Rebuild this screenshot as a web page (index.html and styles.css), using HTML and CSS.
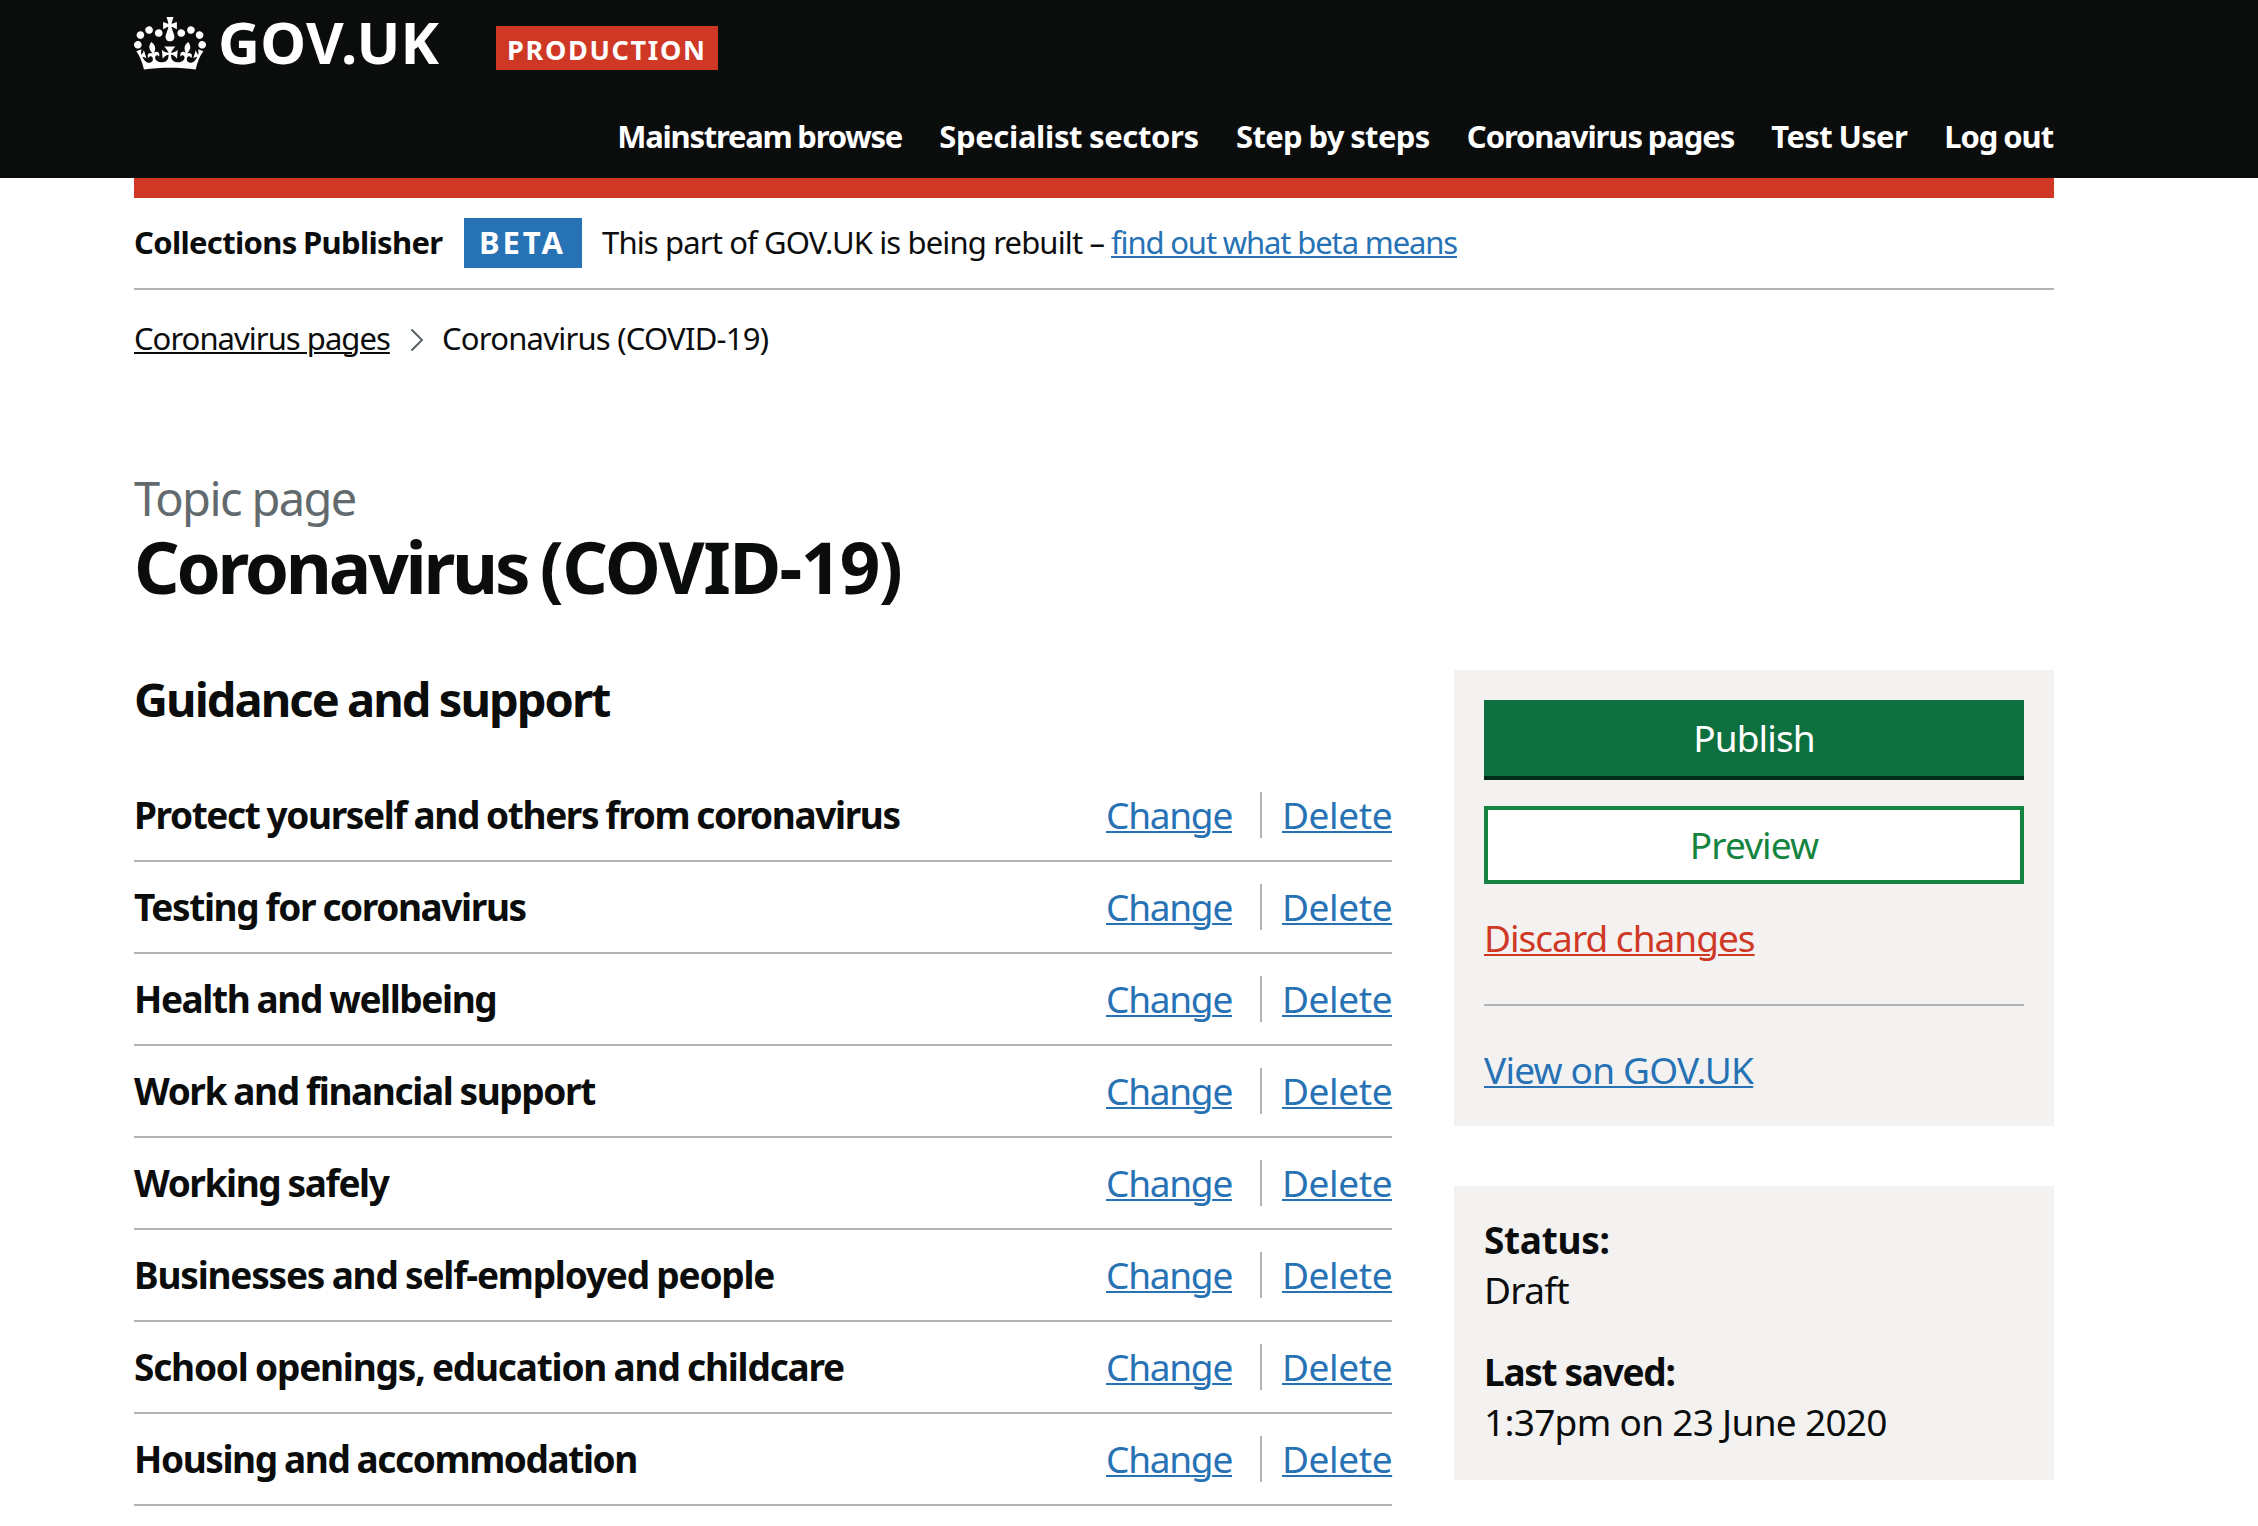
FILE: index.html
```html
<!DOCTYPE html>
<html lang="en">
<head>
<meta charset="utf-8">
<title>Coronavirus (COVID-19) - Collections Publisher</title>
<link rel="stylesheet" href="styles.css">
</head>
<body>
<header class="header">
  <div class="container">
    <div class="brand">
      <svg class="crown" viewBox="0 0 132 97" aria-hidden="true"><path fill="currentColor" fill-rule="evenodd" d="M25 30.2c3.5 1.5 7.7-.2 9.1-3.7 1.5-3.6-.2-7.8-3.9-9.2-3.6-1.4-7.6.3-9.1 3.9-1.4 3.5.3 7.5 3.9 9zM9 39.5c3.6 1.5 7.8-.2 9.2-3.7 1.5-3.6-.2-7.8-3.9-9.1-3.6-1.5-7.6.2-9.1 3.8-1.4 3.5.3 7.5 3.8 9zM4.4 57.2c3.5 1.5 7.7-.2 9.1-3.8 1.5-3.6-.2-7.7-3.9-9.1-3.5-1.5-7.6.3-9.1 3.8-1.4 3.5.3 7.6 3.9 9.1zm38.3-21.4c3.5 1.5 7.7-.2 9.1-3.8 1.5-3.6-.2-7.7-3.9-9.1-3.6-1.5-7.6.3-9.1 3.8-1.3 3.6.4 7.7 3.9 9.1zm64.4-5.6c-3.6 1.5-7.8-.2-9.1-3.7-1.5-3.6.2-7.8 3.8-9.2 3.6-1.4 7.7.3 9.2 3.9 1.3 3.5-.4 7.5-3.9 9zm15.9 9.3c-3.6 1.5-7.7-.2-9.1-3.7-1.5-3.6.2-7.8 3.7-9.1 3.6-1.5 7.7.2 9.2 3.8 1.5 3.5-.3 7.5-3.8 9zm4.7 17.7c-3.6 1.5-7.8-.2-9.2-3.8-1.5-3.6.2-7.7 3.9-9.1 3.6-1.5 7.7.3 9.2 3.8 1.3 3.5-.4 7.6-3.9 9.1zM89.3 35.8c-3.6 1.5-7.8-.2-9.2-3.8-1.4-3.6.2-7.7 3.9-9.1 3.6-1.5 7.7.3 9.2 3.8 1.4 3.6-.3 7.7-3.9 9.1zM69.7 17.7l8.9 4.7V9.3l-8.9 2.8c-.2-.3-.5-.6-.9-.9L72.4 0H59.6l3.5 11.2c-.3.3-.6.5-.9.9l-8.8-2.8v13.1l8.8-4.7c.3.3.6.7.9.9l-5 15.4v.1c-.2.8-.4 1.6-.4 2.4 0 4.1 3.1 7.5 7 8.1h.2c.3 0 .7.1 1 .1.4 0 .7 0 1-.1h.2c4-.6 7.1-4.1 7.1-8.1 0-.8-.1-1.7-.4-2.4V34l-5.1-15.4c.4-.2.7-.6 1-.9zM66 92.8c16.9 0 32.8 1.1 47.1 3.2 4-16.9 8.9-26.7 14-33.5l-9.6-3.4c1 4.9 1.1 7.2 0 10.2-1.5-1.4-3-4.3-4.2-8.7L108.6 76c2.8-2 5-3.2 7.5-3.3-4.4 9.4-10 11.9-13.6 11.2-4.3-.8-6.3-4.6-5.6-7.9 1-4.7 5.7-5.9 8-.5 4.3-8.7-3-11.4-7.6-8.8 7.1-7.2 7.9-13.5 2.1-21.1-8 6.1-8.1 12.3-4.5 20.8-4.7-5.4-12.1-2.5-9.5 6.2 3.4-5.2 7.9-2 7.2 3.1-.6 4.3-6.4 7.8-13.5 7.2-10.3-.9-10.9-8-11.2-13.8 2.5-.5 7.1 1.8 11 7.3L80.2 60c-4.1 4.4-8 5.3-12.3 5.4 1.4-4.4 8-11.6 8-11.6H55.5s6.4 7.2 7.9 11.6c-4.2-.1-8-1-12.3-5.4l1.4 16.4c3.9-5.5 8.5-7.7 10.9-7.3-.3 5.8-.9 12.8-11.1 13.8-7.2.6-12.9-2.9-13.5-7.2-.7-5 3.8-8.3 7.1-3.1 2.7-8.7-4.6-11.6-9.4-6.2 3.7-8.5 3.6-14.7-4.6-20.8-5.8 7.6-5 13.9 2.2 21.1-4.7-2.6-11.9.1-7.7 8.8 2.3-5.5 7.1-4.2 8.1.5.7 3.3-1.3 7.1-5.7 7.9-3.5.7-9-1.8-13.5-11.2 2.5.1 4.7 1.3 7.5 3.3l-4.7-15.4c-1.2 4.4-2.7 7.2-4.3 8.7-1.1-3-.9-5.3 0-10.2l-9.5 3.4c5 6.9 9.9 16.7 14 33.5 14.8-2.1 30.8-3.2 47.7-3.2z"/></svg>
      <span class="logotype">GOV.UK</span>
      <strong class="environment">PRODUCTION</strong>
    </div>
    <nav class="nav">
      <a class="nav-browse">Mainstream browse</a>
      <a class="nav-sectors">Specialist sectors</a>
      <a class="nav-steps">Step by steps</a>
      <a>Coronavirus pages</a>
      <a class="nav-user">Test User</a>
      <a>Log out</a>
    </nav>
  </div>
</header>

<div class="container">
  <div class="stripe"></div>
  <div class="phase">
    <strong class="product">Collections Publisher</strong>
    <strong class="tag">BETA</strong>
    <span class="phase-text">This part of GOV.UK is being rebuilt –</span>
    <a class="link phase-link">find out what beta means</a>
  </div>
  <nav class="breadcrumbs">
    <a class="crumb-link">Coronavirus pages</a>
    <svg class="chevron" viewBox="0 0 14 24" aria-hidden="true"><path d="M1.5 1.5 L12 12 L1.5 22.5" fill="none" stroke="#505a5f" stroke-width="1.8"/></svg>
    <span class="crumb-current">Coronavirus (COVID-19)</span>
  </nav>

  <div class="caption">Topic page</div>
  <h1 class="title">Coronavirus <span class="title-code">(COVID-19)</span></h1>

  <div class="columns">
    <main class="main">
      <h2 class="section-title">Guidance and support</h2>
      <ul class="list">
        <li class="row"><span class="name">Protect yourself and others from coronavirus</span><a class="link change">Change</a><a class="link delete">Delete</a></li>
        <li class="row"><span class="name">Testing for coronavirus</span><a class="link change">Change</a><a class="link delete">Delete</a></li>
        <li class="row"><span class="name">Health and wellbeing</span><a class="link change">Change</a><a class="link delete">Delete</a></li>
        <li class="row"><span class="name">Work and financial support</span><a class="link change">Change</a><a class="link delete">Delete</a></li>
        <li class="row"><span class="name">Working safely</span><a class="link change">Change</a><a class="link delete">Delete</a></li>
        <li class="row"><span class="name name-loose">Businesses and self-employed people</span><a class="link change">Change</a><a class="link delete">Delete</a></li>
        <li class="row"><span class="name name-loose">School openings, education and childcare</span><a class="link change">Change</a><a class="link delete">Delete</a></li>
        <li class="row"><span class="name">Housing and accommodation</span><a class="link change">Change</a><a class="link delete">Delete</a></li>
      </ul>
    </main>
    <aside class="sidebar">
      <section class="panel actions">
        <button class="button publish">Publish</button>
        <button class="button preview">Preview</button>
        <a class="link discard">Discard changes</a>
        <hr class="rule">
        <a class="link view">View on GOV.UK</a>
      </section>
      <section class="panel status">
        <dl class="meta">
          <dt class="meta-status">Status:</dt>
          <dd>Draft</dd>
          <dt>Last saved:</dt>
          <dd>1:37pm on 23 June 2020</dd>
        </dl>
      </section>
    </aside>
  </div>
</div>
</body>
</html>
```
FILE: styles.css
```css
* { box-sizing: border-box; }

body {
  margin: 0;
  height: 1526px;
  overflow: hidden;
  background: #fff;
  color: #0b0c0c;
  font-family: "Noto Sans", "Open Sans", sans-serif;
  font-size: 37px;
  line-height: 50px;
}

.container {
  width: 1920px;
  margin-left: 134px;
}

/* Header */
.header {
  height: 178px;
  background: #0b0c0c;
  color: #fff;
}

.brand {
  display: flex;
  align-items: flex-start;
  height: 110px;
}

.crown {
  width: 72px;
  height: 53px;
  margin-top: 17px;
}

.logotype {
  width: 222px;
  margin: 2px 0 0 12px;
  font-size: 58px;
  font-weight: 700;
  line-height: 80px;
  letter-spacing: 0.3px;
}

.environment {
  width: 222px;
  height: 44px;
  margin: 26px 0 0 56px;
  padding-left: 11px;
  background: #d03826;
  font-size: 27px;
  font-weight: 700;
  line-height: 47px;
  letter-spacing: 1.7px;
}

.nav {
  display: flex;
  justify-content: flex-end;
  gap: 37.2px;
  padding-right: 1px;
  font-size: 31px;
  font-weight: 700;
  line-height: 52px;
  letter-spacing: -1.1px;
  word-spacing: -1px;
}

.nav-browse { letter-spacing: -1.25px; }
.nav-sectors { letter-spacing: -0.35px; }
.nav-steps,
.nav-user { letter-spacing: -0.65px; }

.stripe {
  height: 20px;
  background: #d03826;
}

/* Phase banner */
.phase {
  display: flex;
  align-items: flex-start;
  height: 92px;
  padding-top: 20px;
  border-bottom: 2px solid #b1b4b6;
  font-size: 31px;
  line-height: 48px;
}

.product {
  width: 330px;
  font-weight: 700;
  letter-spacing: -0.68px;
  word-spacing: -1px;
}

.tag {
  width: 118px;
  height: 50px;
  padding-left: 15px;
  background: #2672b5;
  color: #fff;
  font-weight: 700;
  line-height: 49px;
  letter-spacing: 2.9px;
}

.phase-text {
  width: 509px;
  margin-left: 20px;
  letter-spacing: -0.86px;
  white-space: nowrap;
}

.phase-link { letter-spacing: -1.14px; }

.link {
  color: #2672b5;
  text-decoration: underline;
  text-decoration-thickness: 2px;
  text-underline-offset: 2px;
}

/* Breadcrumbs */
.breadcrumbs {
  display: flex;
  align-items: center;
  height: 50px;
  margin-top: 23px;
  font-size: 31px;
  letter-spacing: -0.97px;
}

.crumb-link {
  width: 256px;
  white-space: nowrap;
  text-decoration: underline;
  text-decoration-thickness: 2px;
  text-underline-offset: 2px;
}

.chevron {
  width: 14px;
  height: 24px;
  margin: 4px 18px 0 20px;
}

.crumb-current { letter-spacing: -0.77px; }

/* Page heading */
.caption {
  margin-top: 105px;
  color: #626a6e;
  font-size: 47px;
  line-height: 60px;
  letter-spacing: -1.6px;
}

.title {
  margin: 0;
  font-size: 71px;
  font-weight: 700;
  line-height: 78px;
  letter-spacing: -3.2px;
  word-spacing: -3px;
}

.title-code { letter-spacing: -1.6px; }

.columns {
  display: flex;
  justify-content: space-between;
  margin-top: 64px;
}

/* Accordion list */
.main { width: 1258px; }

.section-title {
  margin: 0;
  height: 100px;
  font-size: 47px;
  font-weight: 700;
  line-height: 58px;
  letter-spacing: -1.95px;
  word-spacing: -1px;
}

.list {
  margin: 0;
  padding: 0;
  list-style: none;
}

.row {
  display: flex;
  align-items: center;
  height: 92px;
  border-bottom: 2px solid #b1b4b6;
}

.name {
  flex: 1;
  padding-bottom: 1px;
  font-weight: 700;
  letter-spacing: -1.4px;
  word-spacing: -1px;
}

.name-loose { letter-spacing: -1.2px; }

.change {
  width: 126px;
  padding-bottom: 1px;
  letter-spacing: -1.25px;
}

.delete {
  width: 132px;
  height: 46px;
  margin-left: 28px;
  padding-left: 20px;
  border-left: 2px solid #b1b4b6;
  line-height: 45px;
  letter-spacing: -0.4px;
}

/* Sidebar */
.sidebar {
  display: flex;
  flex-direction: column;
  gap: 60px;
  width: 600px;
}

.panel {
  padding: 30px;
  background: #f3f2f1;
}

.actions {
  display: flex;
  flex-direction: column;
  align-items: flex-start;
  height: 456px;
}

.button {
  width: 100%;
  border: 0;
  border-radius: 0;
  font: inherit;
  letter-spacing: -0.9px;
}

.publish {
  height: 80px;
  padding: 0 0 1px;
  border-bottom: 4px solid #002d18;
  background: #0f703f;
  color: #fff;
}

.preview {
  height: 78px;
  margin-top: 26px;
  padding: 0;
  border: 4px solid #148440;
  background: #fff;
  color: #148440;
}

.discard {
  margin-top: 29px;
  color: #d03826;
  letter-spacing: -0.98px;
}

.rule {
  width: 100%;
  height: 2px;
  margin: 41px 0 39px;
  border: 0;
  background: #b1b4b6;
}

.view { letter-spacing: -0.8px; }

.status { height: 294px; padding-top: 29px; }

.meta { margin: 0; letter-spacing: -0.7px; }
.meta dt { font-weight: 700; letter-spacing: -1.3px; }
.meta .meta-status { letter-spacing: -0.3px; }
.meta dd { margin: 0; }
.meta dd + dt { margin-top: 32px; }
```
